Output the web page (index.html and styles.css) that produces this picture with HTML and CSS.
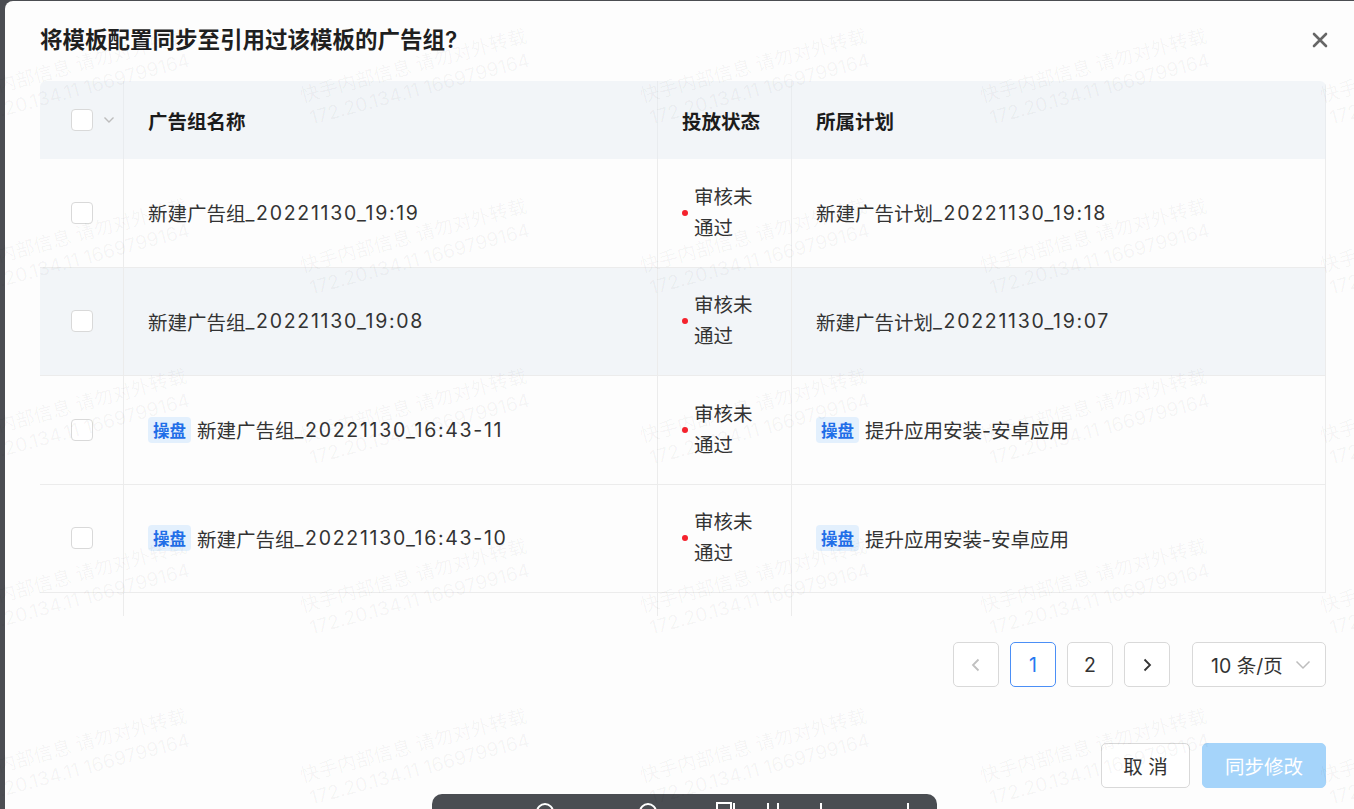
FILE: index.html
```html
<!DOCTYPE html>
<html lang="zh-CN">
<head>
<meta charset="utf-8">
<title>同步模板配置</title>
<link rel="stylesheet" href="styles.css">
</head>
<body>
<div class="modal">
  <div class="modal-header">
    <h2 class="title">将模板配置同步至引用过该模板的广告组?</h2>
    <button class="close" aria-label="关闭">
      <svg width="16" height="16" viewBox="0 0 16 16"><path d="M2 2L14 14M14 2L2 14" stroke="#666" stroke-width="2.6" stroke-linecap="round"/></svg>
    </button>
  </div>

  <div class="table">
    <div class="tr thead">
      <div class="td td-check">
        <span class="checkbox"></span>
        <svg class="sel-arrow" width="12" height="8" viewBox="0 0 12 8"><path d="M1.5 1.5L6 6L10.5 1.5" fill="none" stroke="#bdbdbd" stroke-width="1.4"/></svg>
      </div>
      <div class="td td-name">广告组名称</div>
      <div class="td td-status">投放状态</div>
      <div class="td td-plan">所属计划</div>
    </div>

    <div class="tr">
      <div class="td td-check"><span class="checkbox"></span></div>
      <div class="td td-name">新建广告组<span class="num">_20221130_19:19</span></div>
      <div class="td td-status"><span class="dot"></span><span class="status-text">审核未通过</span></div>
      <div class="td td-plan">新建广告计划<span class="num">_20221130_19:18</span></div>
    </div>

    <div class="tr hover">
      <div class="td td-check"><span class="checkbox"></span></div>
      <div class="td td-name">新建广告组<span class="num">_20221130_19:08</span></div>
      <div class="td td-status"><span class="dot"></span><span class="status-text">审核未通过</span></div>
      <div class="td td-plan">新建广告计划<span class="num">_20221130_19:07</span></div>
    </div>

    <div class="tr">
      <div class="td td-check"><span class="checkbox"></span></div>
      <div class="td td-name"><span class="tag">操盘</span>新建广告组<span class="num">_20221130_16:43-11</span></div>
      <div class="td td-status"><span class="dot"></span><span class="status-text">审核未通过</span></div>
      <div class="td td-plan"><span class="tag">操盘</span>提升应用安装-安卓应用</div>
    </div>

    <div class="tr">
      <div class="td td-check"><span class="checkbox"></span></div>
      <div class="td td-name"><span class="tag">操盘</span>新建广告组<span class="num">_20221130_16:43-10</span></div>
      <div class="td td-status"><span class="dot"></span><span class="status-text">审核未通过</span></div>
      <div class="td td-plan"><span class="tag">操盘</span>提升应用安装-安卓应用</div>
    </div>

    <div class="tr filler">
      <div class="td td-check"></div>
      <div class="td td-name"></div>
      <div class="td td-status"></div>
      <div class="td td-plan"></div>
    </div>
  </div>

  <div class="pagination">
    <span class="page-item disabled">
      <svg width="12" height="14" viewBox="0 0 12 14"><path d="M8.5 1.5L3 7L8.5 12.5" fill="none" stroke="#c0c0c0" stroke-width="1.8"/></svg>
    </span>
    <span class="page-item active">1</span>
    <span class="page-item">2</span>
    <span class="page-item">
      <svg width="12" height="14" viewBox="0 0 12 14"><path d="M3.5 1.5L9 7L3.5 12.5" fill="none" stroke="#333" stroke-width="1.8"/></svg>
    </span>
    <span class="page-size">10 条/页
      <svg width="16" height="10" viewBox="0 0 16 10"><path d="M1.5 1.5L8 8L14.5 1.5" fill="none" stroke="#bdbdbd" stroke-width="1.5"/></svg>
    </span>
  </div>

  <div class="footer">
    <button class="btn">取 消</button>
    <button class="btn btn-primary" disabled>同步修改</button>
  </div>
</div>

<div class="dock">
  <svg class="dock-icon i1" width="20" height="20" viewBox="0 0 20 20"><circle cx="10" cy="10" r="8" fill="none" stroke="#fff" stroke-width="2"/></svg>
  <svg class="dock-icon i2" width="20" height="20" viewBox="0 0 20 20"><circle cx="10" cy="10" r="8" fill="none" stroke="#fff" stroke-width="2"/></svg>
  <svg class="dock-icon i3" width="22" height="20" viewBox="0 0 22 20"><rect x="1" y="1" width="14" height="16" fill="none" stroke="#fff" stroke-width="2"/><path d="M18 1v16" stroke="#fff" stroke-width="2"/></svg>
  <svg class="dock-icon i4" width="14" height="20" viewBox="0 0 14 20"><path d="M2 1v16M12 1v16" stroke="#fff" stroke-width="2"/></svg>
  <svg class="dock-icon i5" width="10" height="20" viewBox="0 0 10 20"><path d="M5 1v16" stroke="#fff" stroke-width="2"/></svg>
  <svg class="dock-icon i6" width="10" height="20" viewBox="0 0 10 20"><path d="M5 1v16" stroke="#fff" stroke-width="2"/></svg>
</div>

<div class="watermark" aria-hidden="true">
  <div class="wm"><span>快手内部信息 请勿对外转载<br>172.20.134.11 1669799164</span></div>
  <div class="wm"><span>快手内部信息 请勿对外转载<br>172.20.134.11 1669799164</span></div>
  <div class="wm"><span>快手内部信息 请勿对外转载<br>172.20.134.11 1669799164</span></div>
  <div class="wm"><span>快手内部信息 请勿对外转载<br>172.20.134.11 1669799164</span></div>
  <div class="wm"><span>快手内部信息 请勿对外转载<br>172.20.134.11 1669799164</span></div>
  <div class="wm"><span>快手内部信息 请勿对外转载<br>172.20.134.11 1669799164</span></div>
  <div class="wm"><span>快手内部信息 请勿对外转载<br>172.20.134.11 1669799164</span></div>
  <div class="wm"><span>快手内部信息 请勿对外转载<br>172.20.134.11 1669799164</span></div>
  <div class="wm"><span>快手内部信息 请勿对外转载<br>172.20.134.11 1669799164</span></div>
  <div class="wm"><span>快手内部信息 请勿对外转载<br>172.20.134.11 1669799164</span></div>
  <div class="wm"><span>快手内部信息 请勿对外转载<br>172.20.134.11 1669799164</span></div>
  <div class="wm"><span>快手内部信息 请勿对外转载<br>172.20.134.11 1669799164</span></div>
  <div class="wm"><span>快手内部信息 请勿对外转载<br>172.20.134.11 1669799164</span></div>
  <div class="wm"><span>快手内部信息 请勿对外转载<br>172.20.134.11 1669799164</span></div>
  <div class="wm"><span>快手内部信息 请勿对外转载<br>172.20.134.11 1669799164</span></div>
  <div class="wm"><span>快手内部信息 请勿对外转载<br>172.20.134.11 1669799164</span></div>
  <div class="wm"><span>快手内部信息 请勿对外转载<br>172.20.134.11 1669799164</span></div>
  <div class="wm"><span>快手内部信息 请勿对外转载<br>172.20.134.11 1669799164</span></div>
  <div class="wm"><span>快手内部信息 请勿对外转载<br>172.20.134.11 1669799164</span></div>
  <div class="wm"><span>快手内部信息 请勿对外转载<br>172.20.134.11 1669799164</span></div>
  <div class="wm"><span>快手内部信息 请勿对外转载<br>172.20.134.11 1669799164</span></div>
  <div class="wm"><span>快手内部信息 请勿对外转载<br>172.20.134.11 1669799164</span></div>
  <div class="wm"><span>快手内部信息 请勿对外转载<br>172.20.134.11 1669799164</span></div>
  <div class="wm"><span>快手内部信息 请勿对外转载<br>172.20.134.11 1669799164</span></div>
  <div class="wm"><span>快手内部信息 请勿对外转载<br>172.20.134.11 1669799164</span></div>
</div>
</body>
</html>
```

FILE: styles.css
```css
* { box-sizing: border-box; }

html, body {
  margin: 0;
  height: 809px;
  overflow: hidden;
}

body {
  position: relative;
  background: #4b4d52;
  font-family: "Inter", "Noto Sans CJK SC", sans-serif;
  color: #333;
}

.modal {
  margin: 1px 0 0 5px;
  width: 1356px;
  min-height: 820px;
  background: #fdfdfd;
  border-radius: 8px 0 0 0;
  padding: 24px 35px 0 35px;
}

.modal-header {
  display: flex;
  align-items: center;
  justify-content: space-between;
}

.title {
  margin: 0;
  font-size: 22.5px;
  line-height: 30px;
  font-weight: 600;
  color: #1f1f1f;
}

.close {
  border: 0;
  background: none;
  padding: 0;
  margin-right: -2px;
  width: 16px;
  height: 16px;
  display: flex;
}

/* table */
.table {
  margin-top: 26px;
  border-radius: 6px 6px 0 0;
  overflow: hidden;
}

.tr {
  display: grid;
  grid-template-columns: 84px 534px 134px 534px;
  height: 108.5px;
  border-bottom: 1px solid #ececec;
  font-size: 19.5px;
  color: #333;
}

.tr.thead {
  height: 78px;
  background: #f2f5f8;
  border-bottom: 0;
  font-weight: 600;
  color: #1c1c1c;
}

.tr.hover { background: #f2f5f8; }

.tr.filler {
  height: 23px;
  border-bottom: 0;
}

.td {
  display: flex;
  align-items: center;
  padding: 0 24px;
  border-right: 1px solid #ececec;
  white-space: nowrap;
}

.thead .td { border-right-color: #e9ecef; }

.filler .td-plan { border-right: 0; }

.num { letter-spacing: 1.7px; }

.td-check {
  padding: 0 0 0 31px;
  gap: 10px;
}

.td-status {
  white-space: normal;
  padding: 0 24px;
  gap: 6px;
}

.status-text {
  width: 62px;
  line-height: 31px;
}

.dot {
  width: 6px;
  height: 6px;
  border-radius: 50%;
  background: #f5222d;
  flex: none;
}

.checkbox {
  width: 22px;
  height: 22px;
  border: 1px solid #d9d9d9;
  border-radius: 4px;
  background: #fff;
  flex: none;
}

.sel-arrow { flex: none; }

.tag {
  display: inline-flex;
  align-items: center;
  height: 26px;
  padding: 0 5px;
  margin-right: 6px;
  border-radius: 4px;
  background: #e3f0fd;
  color: #1f6ee8;
  font-size: 16.5px;
  font-weight: 600;
  letter-spacing: 0;
}

/* pagination */
.pagination {
  margin-top: 26px;
  display: flex;
  justify-content: flex-end;
  align-items: center;
  gap: 11px;
}

.page-item {
  width: 46px;
  height: 45px;
  display: flex;
  align-items: center;
  justify-content: center;
  border: 1px solid #d9d9d9;
  border-radius: 5px;
  background: #fff;
  font-size: 19.5px;
  color: #333;
}

.page-item.active {
  border-color: #4b8ff6;
  color: #2878f0;
}

.page-size {
  margin-left: 11px;
  width: 134px;
  height: 45px;
  display: flex;
  align-items: center;
  justify-content: space-between;
  padding: 0 14px 0 18px;
  border: 1px solid #d9d9d9;
  border-radius: 5px;
  background: #fff;
  font-size: 19.5px;
  color: #333;
}

/* footer */
.footer {
  margin-top: 56px;
  display: flex;
  justify-content: flex-end;
  gap: 12px;
}

.btn {
  height: 45px;
  width: 89px;
  padding: 0;
  border: 1px solid #d9d9d9;
  border-radius: 5px;
  background: #fff;
  font-family: inherit;
  font-size: 19.5px;
  color: #333;
}

.btn-primary {
  width: 124px;
  background: #a5d4fa;
  border-color: #a5d4fa;
  color: #fff;
}

/* dock bar (overlay at bottom) */
.dock {
  position: absolute;
  left: 432px;
  top: 794px;
  width: 505px;
  height: 40px;
  background: #4a4d52;
  border-radius: 10px;
  display: flex;
  padding: 8px 0 0 103px;
}

.dock-icon { flex: none; }
.i2 { margin-left: 83px; }
.i3 { margin-left: 58px; }
.i4 { margin-left: 28px; }
.i5 { margin-left: 36px; }
.i6 { margin-left: 77px; }

/* watermark overlay */
.watermark {
  position: absolute;
  left: -93px;
  top: -7px;
  display: grid;
  grid-template-columns: repeat(5, 340px);
  grid-template-rows: repeat(5, 170px);
  pointer-events: none;
}

.wm {
  display: flex;
  align-items: center;
  justify-content: center;
}

.wm span {
  display: block;
  transform: rotate(-15deg);
  text-align: center;
  font-size: 19px;
  line-height: 24px;
  white-space: nowrap;
  color: rgba(0, 0, 0, 0.045);
}
```
